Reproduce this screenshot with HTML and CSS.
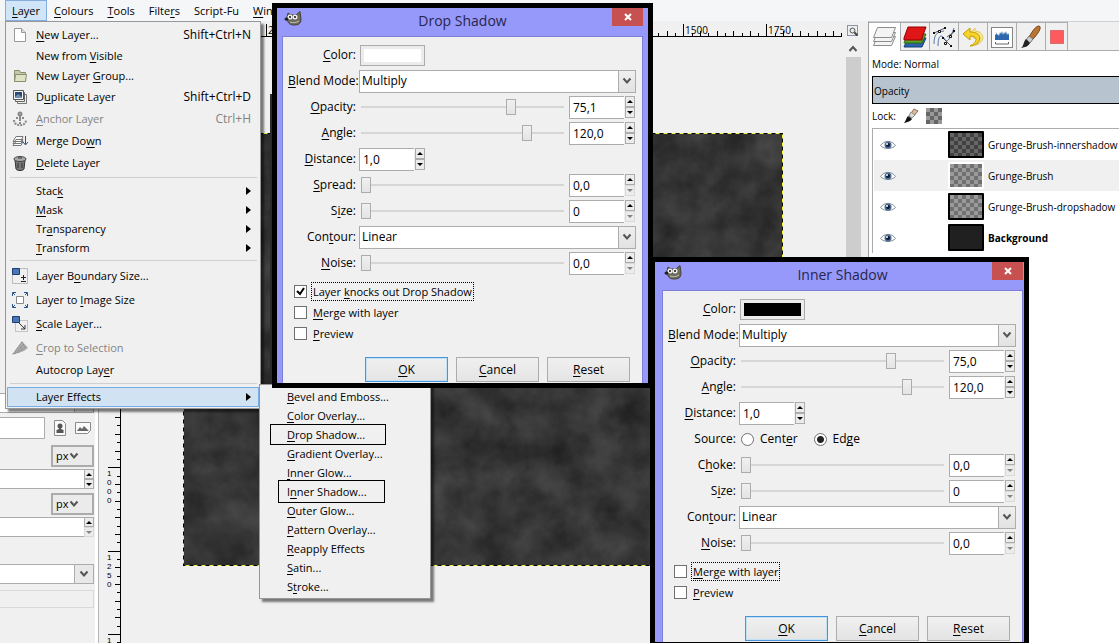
FILE: index.html
```html
<!DOCTYPE html>
<html lang="en">
<head>
    <meta charset="UTF-8">
    <title>GIMP layer effects</title>
    <link rel="stylesheet" href="styles.css">
</head>
<body>

  <nav class="menubar">
      <button class="open"><u>L</u>ayer</button>
      <button><u>C</u>olours</button>
      <button><u>T</u>ools</button>
      <button>Filte<u>r</u>s</button>
      <button>Script-Fu</button>
      <button><u>W</u>indows</button>
  </nav>

  <div class="workspace">

      <!-- tool options -->
      <aside class="tool-options">
          <div class="opt-combo cut"><span class="opt-arrow"></span></div>
          <div class="opt-row size-row">
              <input class="opt-entry" type="text" aria-label="Size">
              <svg width="14" height="16" viewBox="0 0 14 16"><path d="M1.500 .5h8l3 3v12h-11z" fill="#fafafa" stroke="#8a8a8a"/><circle cx="7" cy="6" r="2.500" fill="#555"/><path d="M6 8h2v1l2.500 1v3h-7v-3l2.500-1z" fill="#555"/></svg>
              <svg width="16" height="14" viewBox="0 0 16 14"><path d="M.5 1.500h15v8l-3 3h-12z" fill="#fafafa" stroke="#8a8a8a"/><path d="M2 10l3-4 2 2 2-3 5 5z" fill="#666"/></svg>
          </div>
          <button class="unit">px<svg width="10" height="8" viewBox="0 0 10 8"><path d="M1.500 1.500L5 5.500l3.500-4" fill="none" stroke="#555" stroke-width="2"/></svg></button>
          <div class="opt-spin"><input type="text" aria-label="Width"><span class="steps"><button class="up" aria-label="More"></button><button class="down" aria-label="Less"></button></span></div>
          <button class="unit">px<svg width="10" height="8" viewBox="0 0 10 8"><path d="M1.500 1.500L5 5.500l3.500-4" fill="none" stroke="#555" stroke-width="2"/></svg></button>
          <div class="opt-spin"><input type="text" aria-label="Height"><span class="steps"><button class="up" aria-label="More"></button><button class="down" disabled aria-label="Less"></button></span></div>
          <div class="opt-combo"><span class="opt-arrow"><svg width="10" height="8" viewBox="0 0 10 8"><path d="M1.500 1.500L5 5.500l3.500-4" fill="none" stroke="#555" stroke-width="2"/></svg></span></div>
          <div class="opt-disabled"></div>
      </aside>

      <!-- image window -->
      <main class="image-window">
          <div class="ruler-v">
              <svg width="22" height="623" viewBox="0 20 22 623" shape-rendering="crispEdges">
                  <path d="M21.500 20v623M16 416.500h5M18 424.500h3M16 433.500h5M18 441.500h3M16 450.500h5M18 458.500h3M9 466.500h12M18 475.500h3M16 483.500h5M18 491.500h3M16 500.500h5M18 508.500h3M16 516.500h5M18 525.500h3M16 533.500h5M18 541.500h3M9 550.500h12M18 558.500h3M16 566.500h5M18 575.500h3M16 583.500h5M18 591.500h3M16 600.500h5M18 608.500h3M16 616.500h5M18 625.500h3M9 633.500h12M18 641.500h3" stroke="#000"/>
                  <g class="ruler-text down-text"><text x="8" y="475">1</text><text x="8" y="484">0</text><text x="8" y="493">0</text><text x="8" y="502">0</text>
                  <text x="8" y="559">1</text><text x="8" y="568">2</text><text x="8" y="577">5</text><text x="8" y="586">0</text><text x="8" y="642">1</text></g>
              </svg>
          </div>
          <div class="canvas-column">
              <svg class="ruler-h" width="721" height="17" viewBox="121 20 721 17" shape-rendering="crispEdges">
                  <path d="M121 36.500h721M266.500 24v12M658.500 33v3M667.500 31v5M675.500 33v3M683.500 24v12M692.500 33v3M700.500 31v5M708.500 33v3M717.500 31v5M725.500 33v3M733.500 31v5M742.500 33v3M750.500 31v5M758.500 33v3M766.500 24v12M775.500 33v3M783.500 31v5M792.500 33v3M800.500 31v5M808.500 33v3M817.500 31v5M825.500 33v3M833.500 31v5M841.500 33v3" stroke="#000"/>
                  <g class="ruler-text"><text x="268" y="34">250</text><text x="685" y="34">1500</text><text x="768" y="34">1750</text></g>
              </svg>
              <svg class="picture" width="600" height="433" viewBox="0 0 600 433">
                  <defs>
                      <filter id="grunge" x="0" y="0" width="100%" height="100%" color-interpolation-filters="sRGB">
                          <feTurbulence type="fractalNoise" baseFrequency="0.03" numOctaves="6" seed="8"/>
                          <feColorMatrix values=".2 0 0 0 .11  .2 0 0 0 .11  .2 0 0 0 .11  0 0 0 0 1"/>
                      </filter>
                  </defs>
                  <rect width="600" height="433" fill="#373737" filter="url(#grunge)"/>
                  <rect x=".5" y=".5" width="599" height="432" fill="none" stroke="#000"/>
                  <rect x=".5" y=".5" width="599" height="432" fill="none" stroke="#f2f24a" stroke-dasharray="4 4"/>
              </svg>
          </div>
          <div class="scroll-column">
              <svg width="12" height="12" viewBox="0 0 12 12"><rect x=".5" y=".5" width="10" height="10" fill="none" stroke="#23395d" stroke-dasharray="1 1"/><circle cx="5.500" cy="5.500" r="2.500" fill="#e4e8ee" stroke="#555"/><path d="M7.500 7.500l3 3" stroke="#444" stroke-width="2"/></svg>
              <svg width="10" height="8" viewBox="0 0 10 8"><path d="M1.500 6L5 2l3.500 4" fill="none" stroke="#555" stroke-width="2"/></svg>
              <div class="scroll-thumb"></div>
          </div>
      </main>

      <!-- layers dock -->
      <aside class="layers-dock">
          <div class="tabs">
              <button class="tab active" aria-label="Layers"><svg width="26" height="24" viewBox="0 0 26 24"><g fill="#f4f4f4" stroke="#8c8c8c"><path d="M1.500 20.500l4-9h18l-4 9z"/><path d="M1.500 16.500l4-9h18l-4 9z"/><path d="M1.500 12.500l4-10h18l-4 10z"/></g></svg></button>
              <button class="tab" aria-label="Channels"><svg width="24" height="24" viewBox="0 0 24 24"><path d="M1 22l4-9h18l-4 9z" fill="#2d62a8" stroke="#123f7c"/><path d="M1 18l4-9h18l-4 9z" fill="#5da32a" stroke="#2f6d0b"/><path d="M1 13l4-11h18l-4 11v2H1z" fill="#e01616" stroke="#8e0000"/></svg></button>
              <button class="tab" aria-label="Paths"><svg width="24" height="24" viewBox="0 0 24 24"><path d="M2 19C2 9 5 7 12 6M6 21c0-8 2-12 5-9s3 6 6 2 3-6 5-11" fill="none" stroke="#5876a5"/><path d="M2 8l11-5M11 13l8 8M15 12l7-5" stroke="#555"/><g fill="#fff" stroke="#111"><path d="M6.500 5.500h2v2h-2zM17.500 10.500h2v2h-2zM12.500 17.500h2v2h-2z"/></g><path d="M1 7h2v2H1zM12 2h2v2h-2zM10 12h2v2h-2zM18 20h2v2h-2zM21 5h2v2h-2z" fill="#111"/></svg></button>
              <button class="tab" aria-label="Undo History"><svg width="24" height="24" viewBox="0 0 24 24"><path d="M14 3l-6 6 6 5v-3c6 0 6 6 0 9 9-1 12-13 0-14z" fill="#f7e793" stroke="#e1c766"/><path d="M9 3L2 9l7 6v-4c8 0 8 6 0 10 11 0 15-14 0-14z" fill="#f7d42a" stroke="#c29a05"/></svg></button>
              <button class="tab" aria-label="Histogram"><svg width="24" height="24" viewBox="0 0 24 24"><rect x="1.500" y="2.500" width="21" height="20" fill="#fff" stroke="#858585"/><path d="M5 15V9l1 1V7l1 3 1-1 1 2 1-4 1 2 1-3 1 4 1-3 1 2 1-3 1 4 1-2 1 2v5z" fill="#2d67ad"/><path d="M5.500 17v2h13v-2" fill="none" stroke="#666"/></svg></button>
              <button class="tab" aria-label="Brushes"><svg width="24" height="24" viewBox="0 0 24 24"><path d="M20 1c3 1 0 7-7 14l-3-3c4-7 7-11 10-11z" fill="#b97434" stroke="#714117"/><path d="M10 11l4 3-3 4-4-3z" fill="#ccc" stroke="#777"/><path d="M7 14l4 4c-2 4-5 4-9 5 3-2 2-6 5-9z" fill="#222"/></svg></button>
              <button class="tab small" aria-label="Selection"><svg width="16" height="16" viewBox="0 0 16 16"><rect x="1.500" y="1.500" width="13" height="13" fill="#ff5b5f" stroke="#b33" stroke-dasharray="1 1"/></svg></button>
          </div>
          <div class="mode">Mode: <span>Normal</span></div>
          <div class="opacity">Opacity</div>
          <div class="lock">Lock:
              <svg width="16" height="16" viewBox="0 0 16 16"><path d="M11 1l4 2-6 7-3-2z" fill="#e2bd8c" stroke="#866"/><path d="M8 4l4 3-3 3-3-2z" fill="#ddd" stroke="#888"/><path d="M5 8l4 3c-2 3-5 3-8 4 2-2 2-5 4-7z" fill="#111"/></svg>
              <span class="checker"></span>
          </div>
          <ul class="layers">
              <li><svg class="eye"><use href="#eye"/></svg><span class="thumb dark"></span>Grunge-Brush-innershadow</li>
              <li><svg class="eye"><use href="#eye"/></svg><span class="thumb selected"></span>Grunge-Brush</li>
              <li><svg class="eye"><use href="#eye"/></svg><span class="thumb"></span>Grunge-Brush-dropshadow</li>
              <li class="bold"><svg class="eye"><use href="#eye"/></svg><span class="thumb solid"></span>Background</li>
          </ul>
      </aside>
  </div>

  <svg class="defs">
      <symbol id="eye" viewBox="0 0 16 12"><path d="M.5 6.500C4 1 12 1 15.500 6.500 12 10.500 4 10.500 .5 6.500z" fill="#fff" stroke="#88929a"/><circle cx="8" cy="6" r="3.500" fill="#4a6a94"/><circle cx="8" cy="6" r="2" fill="#0d1c33"/><circle cx="7" cy="5" r="1" fill="#fff"/></symbol>
      <symbol id="chevron" viewBox="0 0 10 8"><path d="M1.500 1.500L5 5.500l3.500-4" fill="none" stroke="#555" stroke-width="2"/></symbol>
      <symbol id="wilber" viewBox="0 0 18 16"><path d="M12 4l4-3.500 1 7.500c0 5-3 6-7 6-4 0-6-2-6-4L2 9l1-3 1-4 3 2z" fill="#6d6a5e" stroke="#45433a"/><circle cx="6" cy="6" r="2.500" fill="#eee"/><circle cx="11" cy="6" r="2.500" fill="#eee"/><circle cx="6" cy="6" r="1" fill="#111"/><circle cx="11" cy="6" r="1" fill="#111"/><ellipse cx="2.500" cy="8" rx="2" ry="1.500" fill="#222"/><path d="M6 11c3 1 6 1 9-1" fill="none" stroke="#c5c2b4"/></symbol>
  </svg>

  <!-- Layer menu -->
  <div class="menu layer-menu">
      <button class="item icon"><svg viewBox="0 0 16 16"><path d="M2.500 1.500h7l4 4v9h-11z" fill="#fff" stroke="#999"/><path d="M9.500 1.500v4h4" fill="#ddd" stroke="#999"/></svg><span><u>N</u>ew Layer...</span><kbd>Shift+Ctrl+N</kbd></button>
      <button class="item"><span>New from <u>V</u>isible</span></button>
      <button class="item"><svg viewBox="0 0 16 16"><path d="M2.500 13.500v-11h5l1 2h5v9z" fill="#c5c9a8" stroke="#8a8e70"/><path d="M2.500 13.500l1-7h11l-1 7z" fill="#dfe3c6" stroke="#8a8e70"/></svg><span>New Layer <u>G</u>roup...</span></button>
      <button class="item icon"><svg viewBox="0 0 16 16"><path d="M5.500 5.500h9v9h-9z" fill="#eee" stroke="#777"/><path d="M3.500 3.500h9v9h-9z" fill="#eee" stroke="#666"/><path d="M1.500 1.500h10v9h-10z" fill="#f5f5f5" stroke="#555"/><path d="M3 3h7v6H3z" fill="#294973"/><path d="M3 8l3-3 4 3v1H3z" fill="#718cae"/></svg><span>D<u>u</u>plicate Layer</span><kbd>Shift+Ctrl+D</kbd></button>
      <button class="item icon" disabled><svg viewBox="0 0 16 16" fill="none" stroke="#888" stroke-width="2"><circle cx="8" cy="3" r="1.500"/><path d="M8 5v8M4 7h8M2 9c0 7 12 7 12 0" stroke-dasharray="2 1"/></svg><span><u>A</u>nchor Layer</span><kbd>Ctrl+H</kbd></button>
      <button class="item icon"><svg viewBox="0 0 16 16"><g fill="#fff" stroke="#777"><path d="M1 12.500l3-4h7l-2 4zM1 10.500l3-4h7l-2 4zM1 8.500l3-5h7l-2 5z"/></g><path d="M13.500 3v8M11 9l2.500 3L16 9" fill="none" stroke="#24518f"/></svg><span>Merge Do<u>w</u>n</span></button>
      <button class="item icon"><svg viewBox="0 0 16 16"><path d="M3 5h10l-1 9c-1 2-7 2-8 0z" fill="#777" stroke="#333"/><ellipse cx="8" cy="4" rx="6" ry="2.500" fill="#aaa" stroke="#444"/><path d="M6 8v5M10 8v5" stroke="#333"/><path d="M6 3h4" stroke="#333"/></svg><span><u>D</u>elete Layer</span></button>
      <hr>
      <button class="item sub"><span>Stac<u>k</u></span></button>
      <button class="item sub"><span><u>M</u>ask</span></button>
      <button class="item sub"><span>Tr<u>a</u>nsparency</span></button>
      <button class="item sub"><span><u>T</u>ransform</span></button>
      <hr>
      <button class="item tall"><svg viewBox="0 0 16 16"><path d="M.5 .5h15v15H.5z" fill="none" stroke="#888" stroke-dasharray="1 1"/><path d="M.5 .5h7v6h-7z" fill="#4a76b4" stroke="#1c3d73"/><path d="M9 9.500h5M11.500 7v5M9 13.500h5" stroke="#222"/></svg><span>Layer B<u>o</u>undary Size...</span></button>
      <button class="item tall"><svg viewBox="0 0 16 16"><path d="M4.500 4.500h7v7h-7z" fill="#fff" stroke="#888"/><path d="M.5 4V.5H4M12 .5h3.500V4M15.500 12v3.500H12M4 15.500H.5V12" fill="none" stroke="#24518f"/><path d="M1 1l2 2M15 1l-2 2M15 15l-2-2M1 15l2-2" stroke="#24518f"/></svg><span>Layer to <u>I</u>mage Size</span></button>
      <button class="item tall"><svg viewBox="0 0 16 16"><path d="M3.500 4.500h12v11h-12z" fill="none" stroke="#999" stroke-dasharray="1 1"/><path d="M.5 .5h7v6h-7z" fill="#4a76b4" stroke="#1c3d73"/><path d="M7 7l6 6M13 9v4H9" fill="none" stroke="#333"/></svg><span><u>S</u>cale Layer...</span></button>
      <button class="item tall" disabled><svg viewBox="0 0 16 16"><path d="M0 15L10 1l6 7-4 3z" fill="#aaa"/><path d="M1 14l9-12M3 14l9-10M6 13l8-7" stroke="#777" stroke-dasharray="1 1"/></svg><span><u>C</u>rop to Selection</span></button>
      <button class="item"><span>Autocrop Lay<u>e</u>r</span></button>
      <hr>
      <button class="item sub current"><span>Layer Effects</span></button>
  </div>

  <div class="menu effects-menu">
      <button class="item"><span><u>B</u>evel and Emboss...</span></button>
      <button class="item"><span><u>C</u>olor Overlay...</span></button>
      <button class="item"><span><u>D</u>rop Shadow...</span><i class="mark wide"></i></button>
      <button class="item"><span><u>G</u>radient Overlay...</span></button>
      <button class="item"><span><u>I</u>nner Glow...</span></button>
      <button class="item"><span>I<u>n</u>ner Shadow...</span><i class="mark"></i></button>
      <button class="item"><span><u>O</u>uter Glow...</span></button>
      <button class="item"><span><u>P</u>attern Overlay...</span></button>
      <button class="item"><span><u>R</u>eapply Effects</span></button>
      <button class="item"><span><u>S</u>atin...</span></button>
      <button class="item"><span>S<u>t</u>roke...</span></button>
  </div>

  <!-- Drop Shadow -->
  <section class="dialog drop-shadow">
      <header><svg class="wilber"><use href="#wilber"/></svg><h2>Drop Shadow</h2>
          <button class="close" aria-label="Close"><svg width="8" height="8" viewBox="0 0 8 8"><path d="M1 1l6 6M7 1L1 7" stroke="#fff" stroke-width="2"/></svg></button></header>
      <form class="panel">
          <div class="row"><label for="ds-color"><u>C</u>olor:</label><button type="button" class="color" id="ds-color"><span class="white"></span></button></div>
          <div class="row"><label for="ds-mode"><u>B</u>lend Mode:</label><div class="combo"><select id="ds-mode"><option>Multiply</option></select><span class="arrow"><svg><use href="#chevron"/></svg></span></div></div>
          <div class="row"><label for="ds-opacity"><u>O</u>pacity:</label><input type="range" id="ds-opacity" min="0" max="100" value="75"><div class="spin"><input type="text" value="75,1" aria-label="Opacity value"><span class="steps"><button type="button" class="up" aria-label="More"></button><button type="button" class="down" aria-label="Less"></button></span></div></div>
          <div class="row"><label for="ds-angle"><u>A</u>ngle:</label><input type="range" id="ds-angle" min="-180" max="180" value="120"><div class="spin"><input type="text" value="120,0" aria-label="Angle value"><span class="steps"><button type="button" class="up" aria-label="More"></button><button type="button" class="down" aria-label="Less"></button></span></div></div>
          <div class="row"><label for="ds-distance"><u>D</u>istance:</label><div class="spin"><input type="text" id="ds-distance" value="1,0"><span class="steps"><button type="button" class="up" aria-label="More"></button><button type="button" class="down" aria-label="Less"></button></span></div></div>
          <div class="row"><label for="ds-spread"><u>S</u>pread:</label><input type="range" id="ds-spread" value="0"><div class="spin"><input type="text" value="0,0" aria-label="Spread value"><span class="steps"><button type="button" class="up" aria-label="More"></button><button type="button" class="down" disabled aria-label="Less"></button></span></div></div>
          <div class="row"><label for="ds-size">S<u>i</u>ze:</label><input type="range" id="ds-size" value="0"><div class="spin"><input type="text" value="0" aria-label="Size value"><span class="steps"><button type="button" class="up" aria-label="More"></button><button type="button" class="down" disabled aria-label="Less"></button></span></div></div>
          <div class="row"><label for="ds-contour">Con<u>t</u>our:</label><div class="combo"><select id="ds-contour"><option>Linear</option></select><span class="arrow"><svg><use href="#chevron"/></svg></span></div></div>
          <div class="row"><label for="ds-noise"><u>N</u>oise:</label><input type="range" id="ds-noise" value="0"><div class="spin"><input type="text" value="0,0" aria-label="Noise value"><span class="steps"><button type="button" class="up" aria-label="More"></button><button type="button" class="down" disabled aria-label="Less"></button></span></div></div>
          <div class="checks">
              <label class="focused"><input type="checkbox" checked><span>Layer <u>k</u>nocks out Drop Shadow</span></label>
              <label><input type="checkbox"><span><u>M</u>erge with layer</span></label>
              <label><input type="checkbox"><span><u>P</u>review</span></label>
          </div>
          <div class="actions"><button type="button" class="default"><u>O</u>K</button><button type="button"><u>C</u>ancel</button><button type="button"><u>R</u>eset</button></div>
      </form>
  </section>

  <!-- Inner Shadow -->
  <section class="dialog inner-shadow">
      <header><svg class="wilber"><use href="#wilber"/></svg><h2>Inner Shadow</h2>
          <button class="close" aria-label="Close"><svg width="8" height="8" viewBox="0 0 8 8"><path d="M1 1l6 6M7 1L1 7" stroke="#fff" stroke-width="2"/></svg></button></header>
      <form class="panel">
          <div class="row"><label for="is-color"><u>C</u>olor:</label><button type="button" class="color" id="is-color"><span class="black"></span></button></div>
          <div class="row"><label for="is-mode"><u>B</u>lend Mode:</label><div class="combo"><select id="is-mode"><option>Multiply</option></select><span class="arrow"><svg><use href="#chevron"/></svg></span></div></div>
          <div class="row"><label for="is-opacity"><u>O</u>pacity:</label><input type="range" id="is-opacity" min="0" max="100" value="75"><div class="spin"><input type="text" value="75,0" aria-label="Opacity value"><span class="steps"><button type="button" class="up" aria-label="More"></button><button type="button" class="down" aria-label="Less"></button></span></div></div>
          <div class="row"><label for="is-angle"><u>A</u>ngle:</label><input type="range" id="is-angle" min="-180" max="180" value="120"><div class="spin"><input type="text" value="120,0" aria-label="Angle value"><span class="steps"><button type="button" class="up" aria-label="More"></button><button type="button" class="down" aria-label="Less"></button></span></div></div>
          <div class="row"><label for="is-distance"><u>D</u>istance:</label><div class="spin"><input type="text" id="is-distance" value="1,0"><span class="steps"><button type="button" class="up" aria-label="More"></button><button type="button" class="down" aria-label="Less"></button></span></div></div>
          <div class="row"><span class="caption">Source:</span><div class="radios"><label><input type="radio" name="source"><span>Cent<u>e</u>r</span></label><label><input type="radio" name="source" checked><span>Ed<u>g</u>e</span></label></div></div>
          <div class="row"><label for="is-choke">C<u>h</u>oke:</label><input type="range" id="is-choke" value="0"><div class="spin"><input type="text" value="0,0" aria-label="Choke value"><span class="steps"><button type="button" class="up" aria-label="More"></button><button type="button" class="down" disabled aria-label="Less"></button></span></div></div>
          <div class="row"><label for="is-size">S<u>i</u>ze:</label><input type="range" id="is-size" value="0"><div class="spin"><input type="text" value="0" aria-label="Size value"><span class="steps"><button type="button" class="up" aria-label="More"></button><button type="button" class="down" disabled aria-label="Less"></button></span></div></div>
          <div class="row"><label for="is-contour">Con<u>t</u>our:</label><div class="combo"><select id="is-contour"><option>Linear</option></select><span class="arrow"><svg><use href="#chevron"/></svg></span></div></div>
          <div class="row"><label for="is-noise"><u>N</u>oise:</label><input type="range" id="is-noise" value="0"><div class="spin"><input type="text" value="0,0" aria-label="Noise value"><span class="steps"><button type="button" class="up" aria-label="More"></button><button type="button" class="down" disabled aria-label="Less"></button></span></div></div>
          <div class="checks">
              <label class="focused"><input type="checkbox"><span><u>M</u>erge with layer</span></label>
              <label><input type="checkbox"><span><u>P</u>review</span></label>
          </div>
          <div class="actions"><button type="button" class="default"><u>O</u>K</button><button type="button"><u>C</u>ancel</button><button type="button"><u>R</u>eset</button></div>
      </form>
  </section>

</body>
</html>
```
FILE: styles.css
```css
* {
    box-sizing: border-box;
}

body {
    margin: 0;
    height: 100vh;
    overflow: hidden;
    display: flex;
    flex-direction: column;
    position: relative;
    background: #f0f0f0;
    color: #000;
    font: 12px/18px "Open Sans", "Noto Sans", sans-serif;
}

button, input, select {
    font: inherit;
    color: inherit;
    margin: 0;
    padding: 0;
    border: none;
    border-radius: 0;
    background: none;
    outline: none;
}

svg {
    display: block;
    flex: none;
}

u {
    text-underline-offset: 2px;
    text-decoration-skip-ink: none;
}

.defs {
    position: absolute;
    width: 0;
    height: 0;
}

/* menu bar */
.menubar {
    display: flex;
    height: 21px;
    padding-left: 5px;
    background: #f5f6f7;
    font-size: 11px;
}

.menubar button {
    padding: 0 6px;
    border: 1px solid transparent;
    white-space: nowrap;
}

.menubar .open {
    background: #d1e5f9;
    border-color: #84acdd;
}

.workspace {
    flex: 1;
    display: flex;
    min-height: 0;
}

/* tool options */
.tool-options {
    width: 99px;
    display: flex;
    flex-direction: column;
    justify-content: flex-end;
    padding: 0 4px 35px 0;
    border-right: 1px solid #b4b4b4;
    box-shadow: inset -3px 0 #fff;
}

.opt-row {
    display: flex;
    align-items: center;
    justify-content: space-between;
    height: 22px;
    margin: 4px 3px 6px 0;
}

.opt-entry {
    width: 45px;
    height: 22px;
    background: #fff;
    border: 1px solid #acacac;
    border-left: none;
}

.unit {
    align-self: flex-end;
    display: flex;
    align-items: center;
    width: 43px;
    height: 22px;
    padding-left: 3px;
    border: 2px solid #acacac;
    background: #ebebeb;
    font-size: 11px;
}

.opt-spin {
    display: flex;
    height: 20px;
    margin: 2px 0 4px;
}

.opt-spin input {
    flex: 1;
    min-width: 0;
    background: #fff;
    border: 1px solid #acacac;
    border-width: 1px 0;
}

.opt-combo {
    display: flex;
    justify-content: flex-end;
    height: 20px;
    margin: 23px 0 6px;
    background: #fff;
    border: 1px solid #acacac;
    border-left: none;
}

.opt-combo.cut {
    margin: 0;
}

.opt-arrow {
    display: grid;
    place-items: center;
    width: 19px;
    border-left: 1px solid #acacac;
    background: #e8e8e8;
}

.opt-disabled {
    height: 18px;
    border: 1px solid #d9d9d9;
    border-left: none;
}

/* image window */
.image-window {
    flex: 1;
    display: flex;
    min-width: 0;
}

.ruler-v {
    width: 22px;
}

.ruler-text {
    font-size: 10px;
}

.down-text {
    font: 8px "Liberation Sans", Arial, sans-serif;
}

.canvas-column {
    flex: 1;
    min-width: 0;
    overflow: hidden;
}

.ruler-h {
    margin-top: -1px;
}

.picture {
    margin: 96px 0 0 62px;
}

.scroll-column {
    display: flex;
    flex-direction: column;
    align-items: center;
    gap: 8px;
    width: 16px;
    margin-right: 7px;
    padding-top: 4px;
}

.scroll-thumb {
    flex: 1;
    width: 15px;
    margin-top: -4px;
    background: #cdcdcd;
}

/* layers dock */
.layers-dock {
    width: 251px;
    background: #fff;
    border-left: 1px solid #a0a0a0;
    border-top: 1px solid #d0d0d0;
    font-size: 10px;
    white-space: nowrap;
}

.tabs {
    display: flex;
    height: 29px;
    background: #f0f0f0;
    box-shadow: inset 0 -1px #acacac;
}

.tab {
    display: grid;
    place-items: center;
    width: 29px;
    border: 1px solid #acacac;
    border-left: none;
}

.tab.active {
    width: 32px;
    background: #fff;
    border-bottom: none;
}

.tab.small {
    width: 22px;
}

.mode {
    padding: 4px 0 3px 3px;
}

.opacity {
    height: 28px;
    margin-left: 3px;
    padding: 5px 1px;
    border: 1px solid #000;
    border-right: none;
    background: #b7c4cf;
}

.lock {
    display: flex;
    align-items: center;
    gap: 7px;
    height: 24px;
    padding-left: 3px;
}

.checker {
    width: 16px;
    height: 16px;
    background: conic-gradient(#666 25%, #999 0 50%, #666 0 75%, #999 0) 0 0/8px 8px;
}

.layers {
    list-style: none;
    margin: 0 0 0 3px;
    padding: 0 0 0 1px;
    border: 1px solid #acacac;
    border-width: 1px 0 0 1px;
}

.layers li {
    display: flex;
    align-items: center;
    height: 31px;
    padding-left: 6px;
}

.layers li:nth-child(2) {
    background: #f0f0f0;
}

.layers .bold {
    font-weight: bold;
}

.eye {
    width: 16px;
    height: 12px;
    margin-right: 52px;
}

.thumb {
    width: 36px;
    height: 27px;
    margin-right: 4px;
    border: 2px solid #000;
    border-radius: 1px;
    background: conic-gradient(#707070 25%, #9a9a9a 0 50%, #707070 0 75%, #9a9a9a 0) 0 0/8px 8px;
}

.thumb.dark {
    background: conic-gradient(#404040 25%, #666 0 50%, #404040 0 75%, #666 0) 0 0/8px 8px;
}

.thumb.selected {
    border-color: #fff;
}

.thumb.solid {
    background: #202020;
}

/* menus */
.menu {
    position: absolute;
    display: flex;
    flex-direction: column;
    background: #f0f0f0;
    border: 1px solid #979797;
    box-shadow: 3px 3px 2px rgba(0, 0, 0, .5);
    font-size: 11px;
}

.layer-menu {
    left: 5px;
    top: 21px;
    width: 256px;
    padding: 2px 1px 1px;
}

.item {
    display: grid;
    grid-template-columns: 16px 1fr auto;
    column-gap: 8px;
    align-items: center;
    height: 20px;
    padding: 0 7px 0 4px;
    border: 1px solid transparent;
    text-align: left;
    white-space: nowrap;
}

.item span {
    grid-column: 2;
}

.item svg {
    grid-row: 1;
    width: 16px;
    height: 16px;
}

.item kbd {
    font: inherit;
    font-size: 12px;
}

.item.icon {
    height: 22px;
}

.item.tall {
    height: 24px;
}

.item.sub {
    height: 19px;
}

.item.sub::after {
    content: "";
    border: 4px solid transparent;
    border-left: 5px solid #000;
    border-right: none;
}

.item.current {
    height: 20px;
    background: #d1e2f2;
    border-color: #78aee5;
}

.item:disabled {
    color: #838383;
}

.menu hr {
    width: 247px;
    height: 1px;
    margin: 3px auto;
    border: none;
    background: #d0d0d0;
}

.effects-menu {
    left: 259px;
    top: 384px;
    width: 172px;
    padding: 2px 0;
}

.effects-menu .item {
    position: relative;
    height: 19px;
    padding-left: 2px;
}

.mark {
    position: absolute;
    left: 17px;
    top: -3px;
    width: 107px;
    height: 23px;
    border: 1px solid #000;
}

.mark.wide {
    left: 9px;
    top: -2px;
    width: 116px;
    height: 21px;
}

/* dialogs */
.dialog {
    position: absolute;
    border: 5px solid #000;
    background: #9698fa;
}

.drop-shadow {
    left: 272px;
    top: 3px;
    padding: 0 5px;
}

/* shadow strip beside the frame */
.drop-shadow::before {
    content: "";
    position: absolute;
    left: -7px;
    top: 86px;
    bottom: 0;
    width: 2px;
    background: #2b2b2b;
}

.inner-shadow {
    left: 650px;
    top: 257px;
    padding: 0 1px 0 7px;
}

.dialog header {
    display: grid;
    grid-template-columns: 31px 1fr 31px;
    height: 28px;
}

.wilber {
    width: 18px;
    height: 16px;
    margin: 3px 0 0 2px;
}

.dialog h2 {
    margin: 0;
    font-size: 14px;
    font-weight: normal;
    line-height: 25px;
    text-align: center;
    color: #26264a;
}

.close {
    display: grid;
    place-items: center;
    height: 18px;
    background: #c75050;
}

.panel {
    width: 361px;
    padding: 5px 6px 1px 5px;
    border: 1px solid #7d7fd6;
    border-bottom: none;
    background: #f0f0f0;
}

.row {
    display: flex;
    align-items: center;
    height: 26px;
}

.row > label, .caption {
    width: 68px;
    margin-right: 3px;
    text-align: right;
    white-space: nowrap;
}

.color {
    width: 65px;
    height: 21px;
    margin-left: 1px;
    padding: 3px;
    border: 1px solid #acacac;
    background: #ececec;
}

.color span {
    display: block;
    height: 13px;
}

.color .white {
    background: #fff;
}

.color .black {
    background: #000;
}

.combo {
    position: relative;
    flex: 1;
    height: 23px;
}

.combo select {
    appearance: none;
    width: 100%;
    height: 100%;
    padding: 0 2px;
    border: 1px solid #acacac;
    background: #fff;
}

.arrow {
    position: absolute;
    right: 0;
    top: 0;
    display: grid;
    place-items: center;
    width: 18px;
    height: 23px;
    border: 1px solid #acacac;
    background: linear-gradient(#efefef, #e2e2e2);
    pointer-events: none;
}

.arrow svg {
    width: 10px;
    height: 8px;
}

.row input[type="range"] {
    appearance: none;
    width: 203px;
    height: 18px;
    margin: 0 5px 0 2px;
}

input[type="range"]::-webkit-slider-runnable-track {
    height: 2px;
    background: #d6d6d6;
}

input[type="range"]::-webkit-slider-thumb {
    appearance: none;
    width: 10px;
    height: 16px;
    margin-top: -7px;
    border: 1px solid #acacac;
    background: linear-gradient(#f0f0f0, #e4e4e4);
}

.spin {
    display: flex;
    align-items: center;
    gap: 1px;
    height: 23px;
}

.spin input {
    width: 55px;
    height: 23px;
    padding-left: 3px;
    border: 1px solid #acacac;
    border-right: none;
    background: #fff;
}

.steps {
    display: flex;
    flex-direction: column;
}

.steps button {
    display: grid;
    place-items: center;
    width: 10px;
    height: 10px;
    border: 1px solid #acacac;
    background: #ececec;
}

.spin .steps button {
    height: 11px;
}

.steps button::after {
    content: "";
    border: 3px solid transparent;
    border-top: none;
    border-bottom-color: #000;
}

.steps .down::after {
    border-top: 3px solid #000;
    border-bottom: none;
}

.steps button:disabled {
    border-color: #d9d9d9;
}

.steps .down:disabled::after {
    border-top-color: #838383;
}

.radios {
    display: flex;
    gap: 14px;
}

.radios label {
    display: flex;
    align-items: center;
    gap: 6px;
}

.radios input {
    appearance: none;
    width: 13px;
    height: 13px;
    margin-left: 2px;
    border: 1px solid #707070;
    border-radius: 50%;
    background: #fff;
}

.radios input:checked {
    background: radial-gradient(circle, #222 3px, #fff 4px);
}

.checks {
    padding: 5px 0 0 6px;
    font-size: 11px;
}

.checks label {
    display: flex;
    align-items: center;
    gap: 4px;
    height: 21px;
}

.checks input {
    appearance: none;
    width: 13px;
    height: 13px;
    border: 1px solid #707070;
    background: #fff;
}

.checks input:checked {
    background: #fff url("data:image/svg+xml,%3Csvg xmlns='http://www.w3.org/2000/svg' viewBox='0 0 11 11'%3E%3Cpath d='M2 5l3 3 4-6' fill='none' stroke='%23000' stroke-width='2'/%3E%3C/svg%3E");
}

.checks span {
    padding: 0 1px;
    border: 1px solid transparent;
    line-height: 17px;
}

.checks .focused span {
    border: 1px dotted #000;
}

.actions {
    display: flex;
    justify-content: flex-end;
    gap: 8px;
    margin: 13px 6px 0 0;
}

.actions button {
    width: 83px;
    height: 25px;
    border: 1px solid #acacac;
    background: linear-gradient(#f0f0f0, #e4e4e4);
}

.actions .default {
    border-color: #4a94dc;
    box-shadow: inset 0 0 0 1px #bfe3f5;
}
```
